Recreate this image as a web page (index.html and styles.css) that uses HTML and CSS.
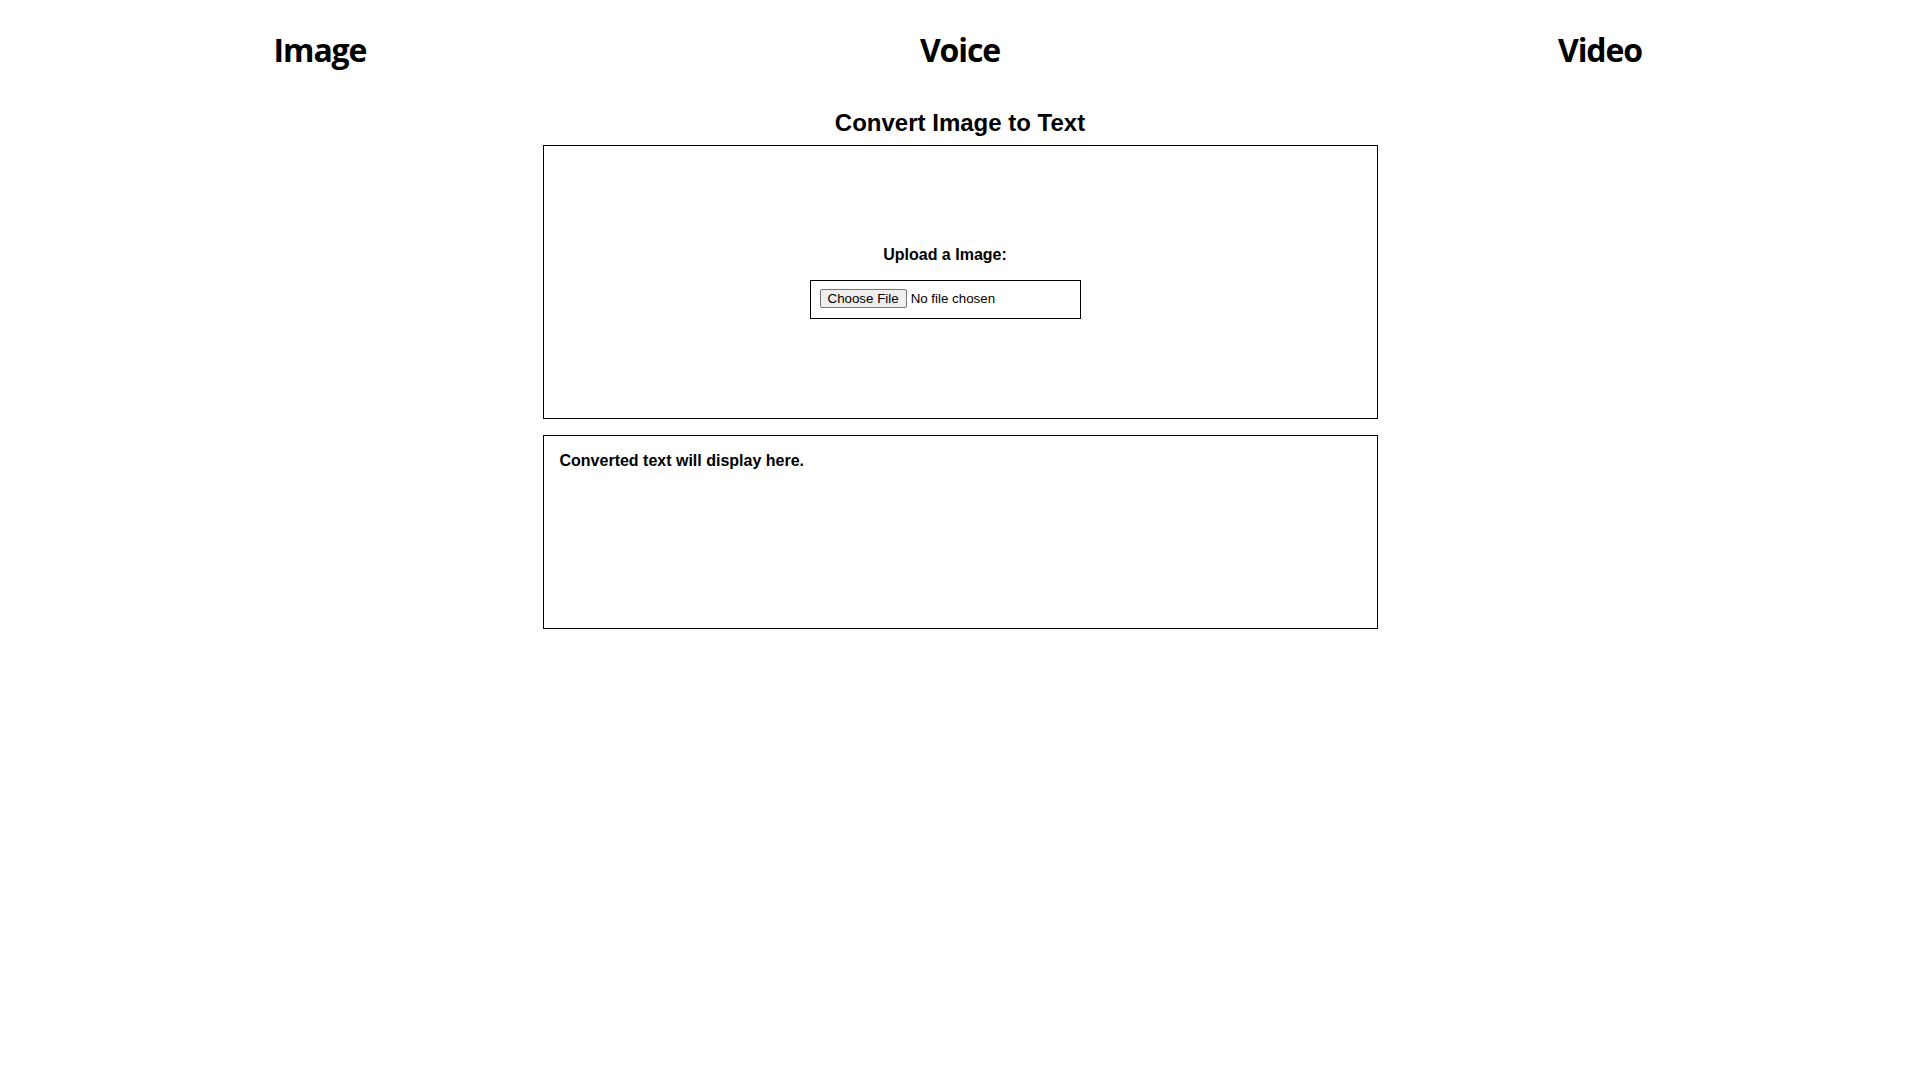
FILE: index.html
```html
<!DOCTYPE html>
<html lang="en">
<head>
<meta charset="utf-8">
<title>Convert Image to Text</title>
<link rel="stylesheet" href="styles.css">
</head>
<body>
<nav class="tabs">
  <h1 class="tab">Image</h1>
  <h1 class="tab">Voice</h1>
  <h1 class="tab">Video</h1>
</nav>
<main class="converter">
  <h2 class="title">Convert Image to Text</h2>
  <section class="upload-box">
    <div class="upload-group">
      <label class="upload-label" for="file">Upload a Image:</label>
      <input class="file-input" id="file" type="file" accept="image/*">
    </div>
  </section>
  <section class="output-box">
    <p class="output-text">Converted text will display here.</p>
  </section>
</main>
</body>
</html>
```

FILE: styles.css
```css
html, body {
  margin: 0;
  padding: 0;
  background: #fff;
  color: #000;
  font-family: "Liberation Sans", Arial, sans-serif;
}

.tabs {
  display: grid;
  grid-template-columns: 1fr 1fr 1fr;
  padding-top: 28px;
}

.tab {
  margin: 0;
  text-align: center;
  font-family: "Open Sans", "Noto Sans", sans-serif;
  font-weight: 700;
  font-size: 32px;
  line-height: 44px;
  letter-spacing: -1.1px;
  color: #000;
}

.converter {
  display: flex;
  flex-direction: column;
  align-items: center;
}

.title {
  margin: 37px 0 8px;
  font-size: 24px;
  line-height: 28px;
  font-weight: 700;
  text-align: center;
}

.upload-box,
.output-box {
  box-sizing: border-box;
  width: 835px;
  border: 1px solid #000;
}

.upload-box {
  height: 274px;
  display: flex;
  align-items: center;
  justify-content: center;
}

.upload-group {
  display: flex;
  flex-direction: column;
  align-items: center;
  gap: 16px;
  margin-right: 30px;
  padding-top: 1px;
}

.upload-label {
  font-size: 16px;
  line-height: 18px;
  font-weight: 700;
}

.file-input {
  box-sizing: border-box;
  width: 271px;
  height: 39px;
  padding: 8px;
  border: 1px solid #000;
  font-family: "Liberation Sans", Arial, sans-serif;
  font-size: 13.333px;
  color: #000;
}

.file-input::file-selector-button {
  font-family: "Liberation Sans", Arial, sans-serif;
  font-size: 13.333px;
  background: #efefef;
  border: 1px solid #767676;
  border-radius: 2px;
  padding: 1px 7px;
  margin-left: 1px;
  margin-right: 4px;
  color: #000;
}

.output-box {
  height: 194px;
  margin-top: 16px;
  padding: 16px;
}

.output-text {
  margin: 0;
  font-size: 16px;
  line-height: 18px;
  font-weight: 700;
}
```
